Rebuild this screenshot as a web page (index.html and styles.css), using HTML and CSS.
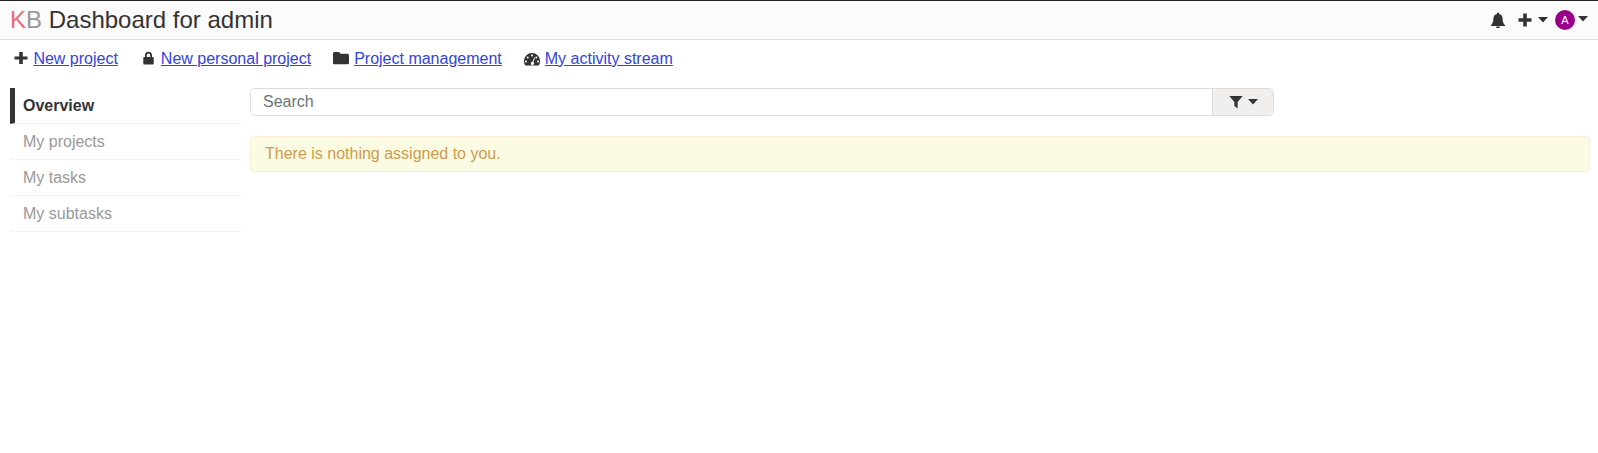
FILE: index.html
```html
<!DOCTYPE html>
<html lang="en">
<head>
<meta charset="utf-8">
<title>Dashboard for admin</title>
<link rel="stylesheet" href="styles.css">
</head>
<body>
<header class="topbar">
  <h1 class="title"><span class="logo"><span class="logo-k">K</span><span class="logo-b">B</span></span> Dashboard for admin</h1>
  <div class="top-actions">
    <svg class="ico bell" viewBox="0 0 16 16"><path d="M8 0.600c-.6 0-1 .4-1 1v.5C4.700 2.500 3.400 4.300 3.400 6.600c0 3.700-1 5.200-2.400 6.600v.9h14v-.9c-1.400-1.400-2.400-2.900-2.400-6.600 0-2.300-1.300-4.100-3.600-4.500v-.5c0-.6-.4-1-1-1zM6.100 14.600a1.900 1.900 0 0 0 3.800 0z"/></svg>
    <span class="drop plus-drop">
      <svg class="ico plus" viewBox="0 0 14 14"><path d="M5.200 0.500h3.600v4.700h4.700v3.600H8.800v4.700H5.200V8.800H.5V5.200h4.700z"/></svg>
      <svg class="caret" viewBox="0 0 10 6"><path d="M0 0h10L5 5.500z"/></svg>
    </span>
    <span class="drop">
      <span class="avatar">A</span>
      <svg class="caret caret-up" viewBox="0 0 10 6"><path d="M0 0h10L5 5.500z"/></svg>
    </span>
  </div>
</header>

<nav class="page-menu">
  <span class="menu-item">
    <svg class="ico menu-plus" viewBox="0 0 14.600 14"><path d="M5.200 1h3.600v4.400h4.700v3.200H8.800v4.400H5.200V8.600H.5V5.400h4.700z"/></svg>
    <a href="#">New project</a>
  </span>
  <span class="menu-item">
    <svg class="ico lock" viewBox="-2.500 0 16 14"><path d="M2.500 6V4.200a3.500 3.500 0 0 1 7 0V6h.7c.6 0 1 .4 1 1v5.500c0 .6-.4 1-1 1H1.800c-.6 0-1-.4-1-1V7c0-.6.4-1 1-1zM4.300 6h3.400V4.200a1.700 1.700 0 0 0-3.400 0z"/></svg>
    <a href="#">New personal project</a>
  </span>
  <span class="menu-item">
    <svg class="ico folder" viewBox="0 0 16 14"><path d="M1.700 1h3.800c.7 0 1.200.4 1.400 1l.3.700h7.100c.9 0 1.700.7 1.700 1.600v7.400c0 .9-.8 1.600-1.700 1.600H1.700C.8 13.300 0 12.600 0 11.700V2.600C0 1.700.8 1 1.700 1z"/></svg>
    <a href="#">Project management</a>
  </span>
  <span class="menu-item">
    <svg class="ico gauge" viewBox="0 0 16 14"><path fill-rule="evenodd" d="M8 1a8 8 0 0 0-8 8c0 1.600.5 3 1.200 4.200.1.200.3.300.5.300h12.600c.2 0 .4-.1.500-.3.700-1.200 1.200-2.600 1.200-4.200a8 8 0 0 0-8-8zM8 2.600a1 1 0 1 1 0 2 1 1 0 0 1 0-2zM3.700 4.400a1 1 0 1 1 0 2 1 1 0 0 1 0-2zM12.300 4.400a1 1 0 1 1 0 2 1 1 0 0 1 0-2zM2 8.500a1 1 0 1 1 0 2 1 1 0 0 1 0-2zM14 8.500a1 1 0 1 1 0 2 1 1 0 0 1 0-2zM10.300 5.400l.8.300-1.700 4.400a1.600 1.600 0 1 1-.9-.3z"/></svg>
    <a href="#">My activity stream</a>
  </span>
</nav>

<div class="layout">
  <aside class="sidebar">
    <ul class="side-list">
      <li class="side-item active">Overview</li>
      <li class="side-item">My projects</li>
      <li class="side-item">My tasks</li>
      <li class="side-item">My subtasks</li>
    </ul>
  </aside>
  <main class="content">
    <div class="search">
      <input class="search-input" type="text" placeholder="Search">
      <span class="filter-btn">
        <svg class="ico filter" viewBox="0 0 14 14"><path d="M.3 1h13.400L8.600 7v6.500L5.400 11V7z"/></svg>
        <svg class="caret" viewBox="0 0 10 6"><path d="M0 0h10L5 5.500z"/></svg>
      </span>
    </div>
    <p class="alert">There is nothing assigned to you.</p>
  </main>
</div>
</body>
</html>
```

FILE: styles.css
```css
* { box-sizing: border-box; }

body {
  margin: 0;
  background: #fff;
  color: #333;
  font-family: "Liberation Sans", Arial, sans-serif;
  font-size: 16px;
}

.topbar {
  height: 40px;
  border-top: 1px solid #222;
  border-bottom: 1px solid #dedede;
  background: #fbfbfb;
  padding: 0 10px;
  display: flex;
  align-items: center;
  justify-content: space-between;
}

.title {
  margin: 0;
  font-size: 24px;
  font-weight: 400;
  line-height: 38px;
  color: #333;
}

.logo-k { color: #f4667a; }
.logo-b { color: #999; }

.top-actions {
  display: flex;
  align-items: center;
  gap: 7px;
}

.drop {
  display: inline-flex;
  align-items: center;
  gap: 3px;
}

.plus-drop { gap: 6px; margin-left: 5px; }

.ico { display: block; fill: #333; flex: none; }
.caret { display: block; width: 10px; height: 6px; fill: #333; flex: none; }
.caret-up { margin-bottom: 3px; }

.bell { width: 16px; height: 16px; }
.plus { width: 14px; height: 14px; }
.menu-plus { width: 14.6px; height: 14px; margin-bottom: 1px; }
.lock { width: 16px; height: 14px; margin-bottom: 2px; }
.folder { width: 16px; height: 14px; margin-bottom: 2px; }
.gauge { width: 16px; height: 14px; }
.filter { width: 14px; height: 14px; }

.avatar {
  width: 20px;
  height: 20px;
  border-radius: 50%;
  background: #99008b;
  color: #fff;
  font-size: 11px;
  line-height: 20px;
  text-align: center;
}

.page-menu {
  display: flex;
  align-items: center;
  gap: 22.2px;
  height: 37px;
  padding: 0 14px;
}

.menu-item {
  display: inline-flex;
  align-items: center;
  gap: 4.8px;
}

.menu-item a { color: #3344dd; }

.layout {
  display: flex;
  gap: 9px;
  padding: 11px 8px 0 10px;
}

.sidebar { width: 231px; flex: none; }

.side-list { list-style: none; margin: 0; padding: 0; }

.side-item {
  height: 36px;
  padding-left: 13px;
  line-height: 35px;
  color: #999;
  border-bottom: 1px dotted #eaeaea;
}

.side-item.active {
  padding-left: 8px;
  border-left: 5px solid #333;
  color: #333;
  font-weight: 700;
}

.content { flex: 1; min-width: 0; }

.search {
  display: flex;
  width: 1024px;
  height: 28px;
  border: 1px solid #ddd;
  border-radius: 5px;
  overflow: hidden;
}

.search-input {
  flex: 1;
  min-width: 0;
  border: 0;
  padding: 0 12px;
  font: inherit;
  outline: none;
  background: #fff;
}

.search-input::placeholder { color: #6c757d; opacity: 1; }

.filter-btn {
  width: 61px;
  flex: none;
  background: #f0efed;
  border-left: 1px solid #ddd;
  display: flex;
  align-items: center;
  justify-content: center;
  gap: 5px;
}

.alert {
  margin: 20px 0 0;
  height: 36px;
  padding: 0 14px;
  line-height: 34px;
  background: #fbfae3;
  border: 1px solid #fbeed5;
  border-radius: 4px;
  color: #cc9c4e;
}
```
